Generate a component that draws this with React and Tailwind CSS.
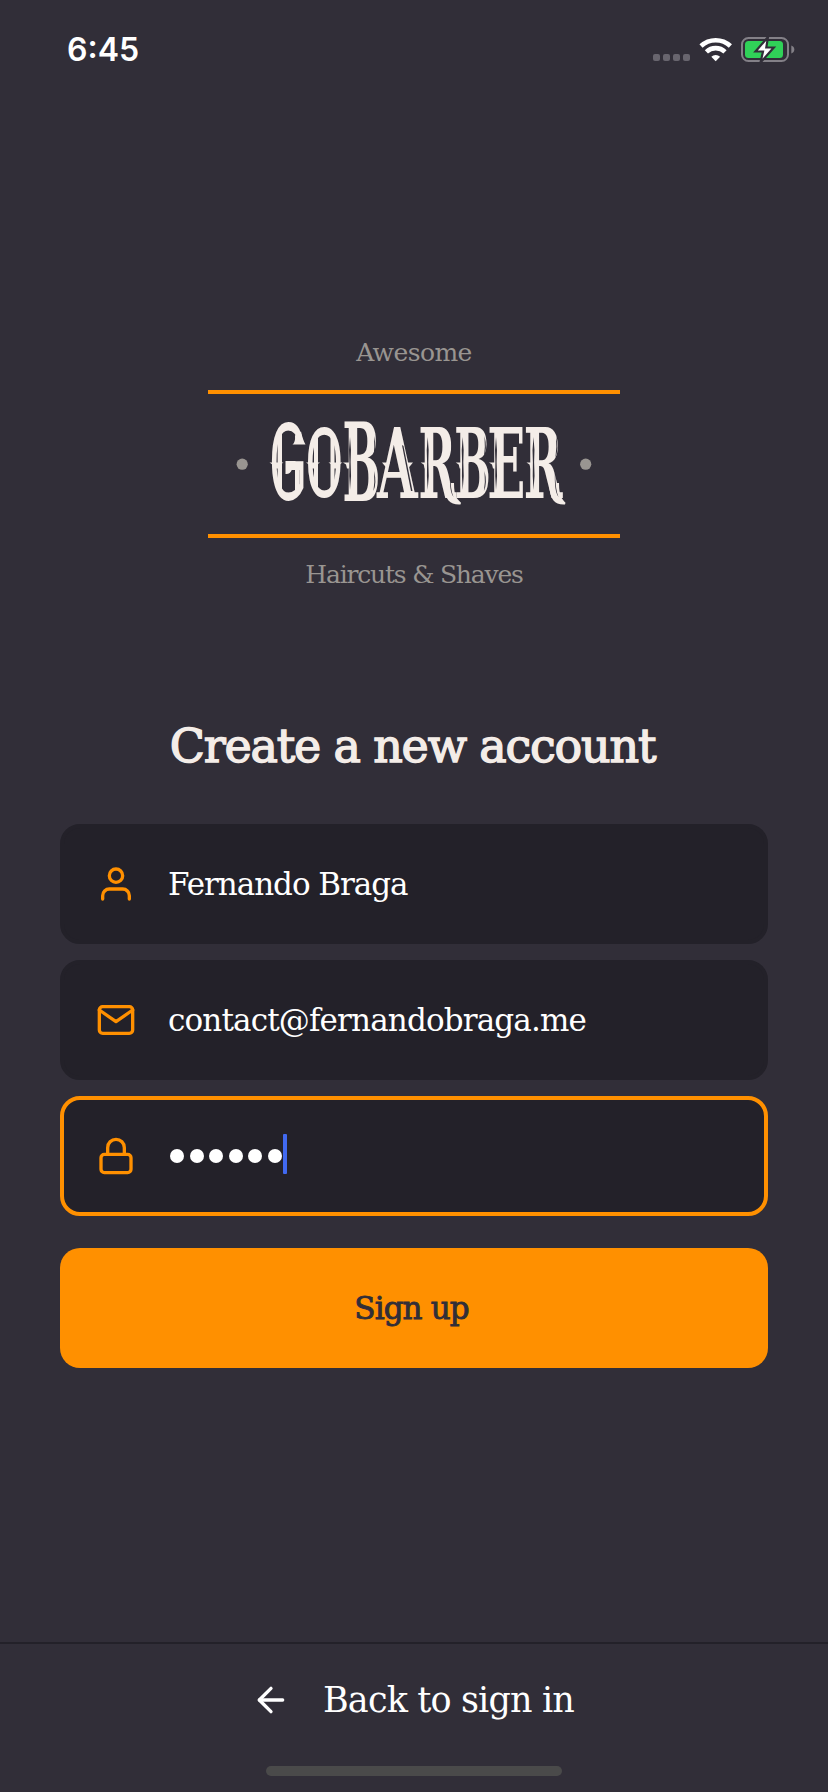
import React from "react";
import { FiUser, FiMail, FiLock, FiArrowLeft } from "react-icons/fi";

const SANS = "font-['Liberation_Sans'] font-normal";
const SERIF = "font-['DejaVu_Serif'] font-bold";

const LETTERS = [
  // ch, font, left, right, top, bottom, glyph box in 1/1000 em (x0, x1, y0, y1)
  ["G", SANS, 47, 79, 17.5, 96, 50, 715, -10, 698],
  ["O", SANS, 83, 115.5, 22.3, 93, 48, 730, -10, 698],
  ["B", SERIF, 119, 152.7, 17.5, 96, 35, 790, 0, 729],
  ["A", SERIF, 151.7, 193, 22.3, 93, -6, 782, 0, 729],
  ["R", SERIF, 195, 232, 22.3, 93, 35, 860, 0, 729],
  ["B", SERIF, 230.7, 263.3, 22.3, 93, 35, 790, 0, 729],
  ["E", SERIF, 264, 298, 22.3, 93, 35, 715, 0, 729],
  ["R", SERIF, 300.5, 339, 22.3, 93, 35, 860, 0, 729],
];

const SPURS = [51.5, 88, 110.5, 125, 202.7, 237.7, 271, 308.5];
const STEMS = [125, 202.7, 237.7, 271, 308.5];
const BOWLS = [149, 226, 259.5, 331];

function Wordmark() {
  return (
    <svg width="378" height="118" viewBox="0 0 378 118" aria-label="GoBarber">
      <g fill="#f4ede8" fontSize="100">
        {LETTERS.map(([ch, font, l, r, t, b, x0, x1, y0, y1], i) => {
          const sx = (r - l) / ((x1 - x0) / 10);
          const sy = (b - t) / ((y1 - y0) / 10);
          return (
            <text
              key={i}
              className={font}
              transform={`translate(${l - (x0 / 10) * sx} ${b + (y0 / 10) * sy}) scale(${sx} ${sy})`}
            >
              {ch}
            </text>
          );
        })}
      </g>
      <g fill="#f4ede8">
        {SPURS.map((x) => (
          <path key={x} d={`M${x - 7} 57.5 h14 l-3 2 l-1 4 h-6 l-1 -4z`} />
        ))}
        <path d="M157 57.5 h8 l-3 6z" />
        <path d="M188 57.5 h-8 l3 6z" />
        <path d="M52.6 30 q2 -5 4.4 -6 v66 q-2.4 -1 -4.4 -6z" />
        <path d="M89 33 q1.5 -4 4 -5.5 v60 q-2.5 -1.5 -4 -5.5z" />
        <path d="M109.5 33 q-1.5 -4 -4 -5.5 v60 q2.5 -1.5 4 -5.5z" />
        <path d="M67.5 39.5 q3 -2 2.5 -9 l6 -4 q2 9 4.500 13z" />
        <path d="M60.5 56 h10 v3.5 q-2.5 1 -3.5 5 q-2 5 -6.5 4.5z" />
        <path d="M70 57 h4 v30 l-4 3z" />
        <path d="M219 78 h10 q0 12 3 15.500 q2 2.300 4 4.300 l-.5 1.700 q-8 .5 -12 -4 q-4 -5 -4.500 -17.500z" />
        <path d="M324 78 h10 q0 12 3 15.500 q1.500 2.300 3.500 4.300 l-.5 1.700 q-8 .5 -11.500 -4 q-4 -5 -4.500 -17.500z" />
      </g>
      <g fill="#312e38">
        {STEMS.map((x) => (
          <path key={x} d={`M${x} 32 q1.6 13 .6 25 q1.2 14 -.6 28 q-1.2 -14 -.6 -28 q-1 -12 .6 -25z`} />
        ))}
        {BOWLS.map((x) => (
          <path key={x} d={`M${x} 31 q3 12 -.6 22 q1.6 -11 .6 -22z`} />
        ))}
        <path d="M149 66 q3 12 -.6 20 q1.6 -9 .6 -20z" />
        <path d="M259.5 66 q3 12 -.6 20 q1.6 -9 .6 -20z" />
        <path d="M225 66 q.5 20 3.500 26 q-4.500 -6 -3.500 -26z" />
        <path d="M330 66 q.5 20 3.500 26 q-4.500 -6 -3.500 -26z" />
        <path d="M177 40 l1.5 1 l9 45 l-1.5 0z" />
      </g>
      <circle cx="17.2" cy="59.2" r="5.6" fill="#999591" />
      <circle cx="360.7" cy="59.2" r="5.6" fill="#999591" />
    </svg>
  );
}

function StatusBar() {
  return (
    <div className="flex h-[100px] items-center justify-between pl-[67px] pr-[33px] text-white">
      <span className="font-['Inter'] text-[32px] leading-none font-semibold">6:45</span>
      <div className="flex items-center">
        <svg width="142" height="28" viewBox="0 0 142 28">
          <g fill="#68656e">
            <rect x="0" y="18" width="7" height="7" rx="2" />
            <rect x="10" y="18" width="7" height="7" rx="2" />
            <rect x="20" y="18" width="7" height="7" rx="2" />
            <rect x="30" y="18" width="7" height="7" rx="2" />
          </g>
          <g fill="none" stroke="#fff" strokeWidth="4.6">
            <path d="M48 10 a21.5 21.5 0 0 1 29.4 0" />
            <path d="M53.4 15.8 a13.5 13.5 0 0 1 18.6 0" />
          </g>
          <path d="M62.7 25.2 l-4.4 -4.4 a6.2 6.2 0 0 1 8.8 0z" fill="#fff" />
          <rect x="89" y="2" width="46" height="23" rx="6.5" fill="none" stroke="#838087" strokeWidth="2" />
          <path d="M138.3 9.5 q3 1.2 3 4 t-3 4z" fill="#838087" />
          <rect x="92" y="5" width="38" height="17" rx="3.5" fill="#30d158" />
          <path d="M115 1 L102.5 15.5 h7.5 L107.5 26.5 L120.8 11.5 h-7.5z" fill="#fff" stroke="#312e38" strokeWidth="2.2" />
        </svg>
      </div>
    </div>
  );
}

function Field({ icon: Icon, focused, children }) {
  return (
    <div
      className={
        "flex h-[120px] items-center rounded-[20px] border-4 bg-[#232129] pl-8 " +
        (focused ? "border-[#ff9000]" : "border-[#232129]")
      }
    >
      <Icon size={40} className="shrink-0 text-[#ff9000]" />
      <div className="ml-8 flex items-center text-[31px] leading-[40px] text-white">{children}</div>
    </div>
  );
}

export default function App() {
  return (
    <div className="flex h-[1792px] w-[828px] flex-col overflow-hidden bg-[#312e38] font-['Roboto_Slab','DejaVu_Serif',serif] whitespace-nowrap">
      <StatusBar />

      <header className="mx-auto mt-[233px] flex w-[412px] flex-col items-center text-[25px] leading-[40px] text-[#999591]">
        <p className="tracking-[-0.55px]">Awesome</p>
        <div className="mt-[17px] flex h-[148px] w-full items-center justify-center border-y-4 border-[#ff9000]">
          <Wordmark />
        </div>
        <p className="mt-[17px] tracking-[-1.2px]">Haircuts &amp; Shaves</p>
      </header>

      <main className="mt-[119px] flex flex-col px-[60px]">
        <h1 className="pr-[3px] text-center text-[46px] leading-[64px] tracking-[-1.2px] text-[#f4ede8] [-webkit-text-stroke:1.4px_#f4ede8]">
          Create a new account
        </h1>
        <form className="mt-[46px] flex flex-col gap-4">
          <Field icon={FiUser}>
            <span className="tracking-[-1.05px]">Fernando Braga</span>
          </Field>
          <Field icon={FiMail}>
            <span className="tracking-[-0.85px]">contact@fernandobraga.me</span>
          </Field>
          <Field icon={FiLock} focused>
            <span className="ml-[2px] flex gap-[5.5px]">
              {[0, 1, 2, 3, 4, 5].map((i) => (
                <i key={i} className="size-[14px] rounded-full bg-white" />
              ))}
            </span>
            <span className="mb-1 ml-px h-10 w-1 rounded-[1px] bg-[#4169f0]" />
          </Field>
          <button
            type="button"
            className="mt-4 h-[120px] rounded-[20px] bg-[#ff9000] pr-[5px] text-[31px] tracking-[-0.9px] text-[#312e38] [-webkit-text-stroke:0.9px_#312e38]"
          >
            Sign up
          </button>
        </form>
      </main>

      <footer className="mt-auto flex h-[150px] flex-col items-center border-t-2 border-[#232129] text-white">
        <div className="mt-9 flex h-10 w-[326px] items-center gap-8">
          <FiArrowLeft size={40} className="shrink-0" />
          <span className="text-[35px] leading-[40px] tracking-[-0.85px]">Back to sign in</span>
        </div>
        <div className="mt-[46px] h-[10px] w-[296px] rounded-full bg-[#4a4a4a]" />
      </footer>
    </div>
  );
}
